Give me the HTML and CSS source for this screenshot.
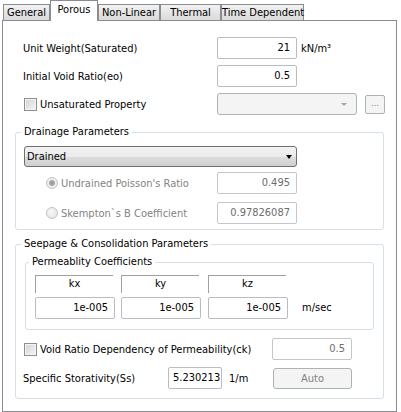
FILE: index.html
```html
<!DOCTYPE html>
<html>
<head>
<meta charset="utf-8">
<link rel="stylesheet" href="styles.css">
</head>
<body>
<div class="tabs">
  <div class="tab t-general">General</div>
  <div class="tab active t-porous">Porous</div>
  <div class="tab t-nonlinear">Non-Linear</div>
  <div class="tab t-thermal">Thermal</div>
  <div class="tab t-time">Time Dependent</div>
</div>
<div class="panel">
  <div class="row r-unit">
    <span class="lbl lbl-main">Unit Weight(Saturated)</span>
    <div class="field">21</div>
    <span class="unit">kN/m³</span>
  </div>
  <div class="row r-void">
    <span class="lbl lbl-main">Initial Void Ratio(eo)</span>
    <div class="field">0.5</div>
  </div>
  <div class="row r-unsat">
    <div class="chk-group">
      <span class="checkbox"></span>
      <span class="lbl">Unsaturated Property</span>
    </div>
    <div class="combo-dis"><span class="arrow-dis"></span></div>
    <div class="btn-dots">...</div>
  </div>

  <fieldset class="group g-drain">
    <legend>Drainage Parameters</legend>
    <div class="combo"><span class="combo-text">Drained</span><span class="arrow"></span></div>
    <div class="row r-radio1">
      <div class="radio-group">
        <span class="radio checked"></span>
        <span class="lbl dis">Undrained Poisson's Ratio</span>
      </div>
      <div class="field dis">0.495</div>
    </div>
    <div class="row r-radio2">
      <div class="radio-group">
        <span class="radio"></span>
        <span class="lbl dis">Skempton`s B Coefficient</span>
      </div>
      <div class="field dis">0.97826087</div>
    </div>
  </fieldset>

  <fieldset class="group g-seep">
    <legend>Seepage &amp; Consolidation Parameters</legend>
    <fieldset class="group g-perm">
      <legend>Permeablity Coefficients</legend>
      <div class="perm-grid">
        <div class="hdr">kx</div>
        <div class="hdr">ky</div>
        <div class="hdr">kz</div>
        <div></div>
        <div class="field">1e-005</div>
        <div class="field">1e-005</div>
        <div class="field">1e-005</div>
        <div class="unit-ms">m/sec</div>
      </div>
    </fieldset>
    <div class="row r-ck">
      <div class="chk-group ck-group">
        <span class="checkbox"></span>
        <span class="lbl">Void Ratio Dependency of Permeability(ck)</span>
      </div>
      <div class="field dis">0.5</div>
    </div>
    <div class="row r-ss">
      <span class="lbl lbl-ss">Specific Storativity(Ss)</span>
      <div class="field field-ss">5.230213</div>
      <span class="unit-m">1/m</span>
      <div class="btn-auto">Auto</div>
    </div>
  </fieldset>
</div>
</body>
</html>
```

FILE: styles.css
```css
html, body {
  margin: 0;
  padding: 0;
  background: #ffffff;
}
body {
  font-family: "DejaVu Sans", "Liberation Sans", sans-serif;
  font-stretch: condensed;
  font-size: 11px;
  color: #000;
  width: 401px;
  height: 412px;
  overflow: hidden;
}

/* Tabs */
.tabs {
  display: flex;
  align-items: flex-end;
  height: 20px;
  padding-left: 3px;
}
.tab {
  box-sizing: border-box;
  height: 16px;
  border: 1px solid #898c95;
  border-bottom: none;
  background: linear-gradient(#f3f3f3, #e5e5e5 50%, #dadada);
  text-align: center;
  line-height: 15px;
  white-space: nowrap;
}
.tab.active {
  position: relative;
  z-index: 1;
  height: 21px;
  margin-bottom: -1px;
  background: #ffffff;
  line-height: 18px;
}
.t-general { width: 47px; }
.t-porous { width: 48px; }
.t-nonlinear { width: 62px; }
.t-thermal { width: 61px; }
.t-time { width: 83px; }

/* Panel */
.panel {
  box-sizing: border-box;
  margin-left: 2px;
  width: 395px;
  height: 392px;
  border: 1px solid #898c95;
  background: #ffffff;
}

.row {
  display: flex;
  align-items: center;
  height: 22px;
}
.lbl {
  white-space: nowrap;
  line-height: 13px;
}
.lbl.dis { color: #838383; }

.field {
  box-sizing: border-box;
  width: 80px;
  height: 22px;
  border: 1px solid #b9bcc2;
  border-radius: 2px;
  background: #ffffff;
  text-align: right;
  padding-right: 6px;
  line-height: 20px;
  white-space: nowrap;
  overflow: hidden;
}
.field.dis { color: #6d6d6d; border-color: #c3c6cb; }

.r-unit { margin-top: 16px; padding-left: 20px; }
.r-void { margin-top: 6px; padding-left: 20px; }
.lbl-main { width: 194px; }
.unit { margin-left: 4px; }

.r-unsat { margin-top: 6px; padding-left: 21px; }
.chk-group {
  display: flex;
  align-items: center;
  width: 193px;
}
.checkbox {
  box-sizing: border-box;
  width: 13px;
  height: 13px;
  border: 1px solid #8e8f8f;
  background: linear-gradient(135deg, #d0d2d6, #f7f7f7);
  box-shadow: inset 0 0 0 1px #f4f4f4;
  margin-right: 3px;
  flex: none;
}
.combo-dis {
  position: relative;
  box-sizing: border-box;
  width: 140px;
  height: 22px;
  border: 1px solid #adb2b5;
  border-radius: 3px;
  background: #f4f4f4;
}
.arrow-dis {
  position: absolute;
  right: 9px;
  top: 9px;
  width: 0;
  height: 0;
  border-left: 3px solid transparent;
  border-right: 3px solid transparent;
  border-top: 3px solid #a5a5a5;
}
.btn-dots {
  box-sizing: border-box;
  margin-left: 8px;
  width: 20px;
  height: 19px;
  border: 1px solid #adb2b5;
  border-radius: 2px;
  background: #f4f4f4;
  color: #838383;
  font-size: 9px;
  text-align: center;
  line-height: 14px;
}

/* Group boxes */
.group {
  box-sizing: border-box;
  margin: 0;
  padding: 0;
  min-inline-size: 0;
  border: 1px solid #d5dfe5;
  border-radius: 3px;
}
.group legend {
  padding: 0 3px;
  margin-left: 5px;
  line-height: 14px;
  white-space: nowrap;
}

.g-drain {
  margin: 10px 0 0 12px;
  width: 369px;
  padding-bottom: 5px;
}
.combo {
  position: relative;
  box-sizing: border-box;
  margin: 7px 0 0 8px;
  width: 273px;
  height: 21px;
  border: 1px solid #707070;
  border-radius: 3px;
  background: linear-gradient(#f2f2f2, #ebebeb 50%, #dddddd 51%, #cfcfcf);
}
.combo-text {
  display: block;
  padding-left: 2px;
  line-height: 19px;
}
.arrow {
  position: absolute;
  right: 4px;
  top: 8px;
  width: 0;
  height: 0;
  border-left: 3.5px solid transparent;
  border-right: 3.5px solid transparent;
  border-top: 4px solid #000000;
}
.r-radio1 { margin-top: 5px; padding-left: 30px; }
.r-radio2 { margin-top: 8px; padding-left: 30px; }
.radio-group {
  display: flex;
  align-items: center;
  width: 171px;
}
.radio {
  box-sizing: border-box;
  width: 12px;
  height: 12px;
  border: 1px solid #c2c2c2;
  border-radius: 50%;
  background: radial-gradient(circle at 40% 40%, #f8f8f8, #e2e2e2);
  margin-right: 3px;
  flex: none;
}
.radio.checked {
  background: radial-gradient(circle, #9a9a9a 0, #a8a8a8 2.5px, #eeeeee 3.5px, #f4f4f4);
}

.g-seep {
  margin: 7px 0 0 12px;
  width: 369px;
  padding-bottom: 9px;
}
.g-perm {
  margin: 4px 0 0 9px;
  width: 349px;
  padding-bottom: 10px;
}
.g-perm legend { margin-left: 3px; }

.perm-grid {
  display: grid;
  grid-template-columns: 86px 87px 80px auto;
  grid-template-rows: 18px 22px;
  row-gap: 4px;
  margin: 6px 0 0 9px;
}
.hdr {
  box-sizing: border-box;
  width: 78px;
  height: 18px;
  border-top: 1px solid #a0a0a0;
  border-left: 1px solid #a0a0a0;
  text-align: center;
  line-height: 16px;
}
.unit-ms {
  padding-left: 14px;
  line-height: 22px;
}

.r-ck { margin-top: 8px; padding-left: 8px; }
.ck-group { width: 248px; }

.r-ss { margin-top: 7px; padding-left: 7px; }
.lbl-ss { width: 145px; }
.field-ss {
  width: 54px;
  text-align: left;
  padding-left: 4px;
  padding-right: 0;
}
.unit-m {
  margin-left: 7px;
  width: 44px;
}
.btn-auto {
  box-sizing: border-box;
  width: 79px;
  height: 21px;
  margin-top: 1px;
  border: 1px solid #adb2b5;
  border-radius: 3px;
  background: #f4f4f4;
  color: #838383;
  text-align: center;
  line-height: 19px;
}
```
